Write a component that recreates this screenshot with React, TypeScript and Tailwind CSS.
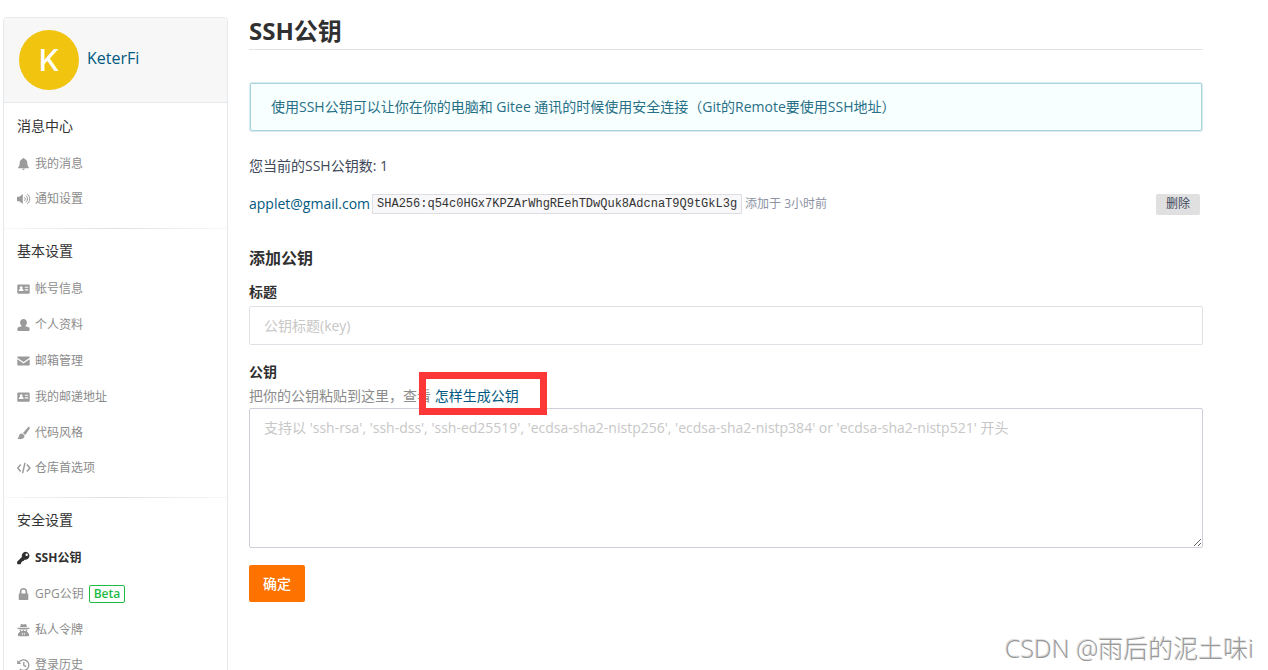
import type { ReactNode } from "react";

interface NavItem {
  label: string;
  icon: ReactNode;
  active?: boolean;
  badge?: string;
}

interface NavSection {
  title: string;
  items: NavItem[];
}

function Icon({ children }: { children: ReactNode }) {
  return (
    <svg viewBox="0.5 0 14 14" className="w-3.5 h-3.5 shrink-0" fill="currentColor" aria-hidden="true">
      {children}
    </svg>
  );
}

const bellIcon = (
  <Icon>
    <path d="M7 1c.6 0 1 .4 1 .9 1.900.5 2.800 2 2.800 3.800 0 2.400.4 3.600 1.600 4.700v.9H1.600v-.9C2.800 9.300 3.200 8.100 3.200 5.700c0-1.800.9-3.300 2.800-3.800C6 1.400 6.400 1 7 1zM5.600 11.700h2.800c-.2.800-.7 1.200-1.400 1.200s-1.200-.4-1.400-1.200z" />
  </Icon>
);

const volumeIcon = (
  <Icon>
    <path d="M.5 4.800h2.300L6.300 2v10L2.800 9.200H.5z" />
    <path
      d="M8 5.200c1.100.9 1.100 2.700 0 3.600M9.300 3.500c2.200 1.700 2.200 5.300 0 7M10.600 1.900c3.500 2.500 3.500 7.700 0 10.200"
      fill="none"
      stroke="currentColor"
      strokeWidth="1"
    />
  </Icon>
);

const cardIcon = (
  <Icon>
    <path
      fillRule="evenodd"
      d="M1.600 2.500h10.800c.4 0 .8.400.8.800v7.600c0 .4-.4.800-.8.800H1.600c-.4 0-.8-.4-.8-.8V3.300c0-.4.400-.8.800-.8zM4.700 4.300a1.400 1.400 0 0 0-.9 2.500c-1 .3-1.500 1-1.500 2.200h4.800c0-1.200-.5-1.900-1.500-2.200a1.400 1.400 0 0 0-.9-2.500zM8.300 4.700v1.100h3.400V4.700zM8.300 7.300v1.100h3.400V7.300z"
    />
  </Icon>
);

const userIcon = (
  <Icon>
    <path d="M7 1c2 0 3.400 1.400 3.400 3.400 0 1.400-.6 2.700-1.500 3.400v.5l3.300.9c.6.200.9.600.9 1.200v1.800c0 .4-.3.700-.7.700H1.600c-.4 0-.7-.3-.7-.7v-1.800c0-.6.300-1 .9-1.200l3.300-.9v-.5c-.9-.7-1.500-2-1.500-3.400C3.600 2.400 5 1 7 1z" />
  </Icon>
);

const mailIcon = (
  <Icon>
    <path d="M1.500 2.500h11c.4 0 .7.300.7.700v.6L7 8 .8 3.800v-.6c0-.4.300-.7.700-.7z" />
    <path d="M.8 5.200 7 9.400l6.200-4.200v5.600c0 .4-.3.700-.7.700h-11c-.4 0-.7-.3-.7-.7z" />
  </Icon>
);

const brushIcon = (
  <Icon>
    <path d="M12.900 1c.6.500.4 1.300 0 1.900L8.700 9 6.500 7 11.300 1.500c.4-.5 1.100-.9 1.600-.5zM5.700 7.500l2.300 2.100c.2 2.300-1.600 3.700-4.200 3.600-1.300 0-2.400-.4-3.100-1.200 1.500-.2 1.500-.9 1.700-2 .3-1.600 1.600-2.700 3.300-2.500z" />
  </Icon>
);

const codeIcon = (
  <Icon>
    <path
      d="M4.200 3.500 1.200 7l3 3.500M10.400 3.500 13.400 7l-3 3.500M8.500 1.900 6.100 12.100"
      fill="none"
      stroke="currentColor"
      strokeWidth="1.500"
    />
  </Icon>
);

const keyIcon = (
  <Icon>
    <path
      fillRule="evenodd"
      d="M9.200.8a4 4 0 1 1-1.100 7.900l-1.100 1.200H5.800v1.300H4.500v1.300c0 .4-.3.700-.7.700H1.300c-.4 0-.7-.3-.7-.7v-1.700L5.400 6A4 4 0 0 1 9.200.8zM10.200 2.500a1.200 1.200 0 1 0 0 2.500 1.200 1.200 0 0 0 0-2.500z"
    />
  </Icon>
);

const lockIcon = (
  <Icon>
    <path
      fillRule="evenodd"
      d="M7 .9c2.200 0 3.700 1.500 3.700 3.700v1.800h.3c.4 0 .8.400.8.800v5c0 .4-.4.800-.8.800H3c-.4 0-.8-.4-.8-.8v-5c0-.4.400-.8.800-.8h.3V4.600C3.300 2.400 4.800.9 7 .9zM7 2.500c-1.200 0-2 .8-2 2.100v1.800h4V4.600c0-1.300-.8-2.100-2-2.100z"
    />
  </Icon>
);

const agentIcon = (
  <Icon>
    <path d="M4.400 1.200c.9-.4 1.600.2 2.600.2s1.700-.6 2.600-.2l.9 2.900H3.500zM1 4.800h12v1.100H1z" />
    <path
      fillRule="evenodd"
      d="M3 6.600h8c0 1-.3 1.700-.8 2.200 1.500.5 2.300 1.600 2.300 3.200v.5c0 .4-.3.700-.7.700H2.200c-.4 0-.7-.3-.7-.7V12c0-1.600.8-2.700 2.300-3.200C3.300 8.300 3 7.600 3 6.600zM4.300 7.100l.4 1h1.500l.4-1zM7.400 7.100l.4 1h1.500l.4-1zM5.400 9.500l.8 3 .5-2zM8.600 9.500l-1.300 1 .5 2z"
    />
  </Icon>
);

const historyIcon = (
  <Icon>
    <path d="M.7 2v4.100h4.100z" />
    <path
      d="M2.300 4.700A5.300 5.300 0 1 1 3.400 11M7.300 3.900v3.400l2.400 1.300"
      fill="none"
      stroke="currentColor"
      strokeWidth="1.300"
    />
  </Icon>
);

const sections: NavSection[] = [
  {
    title: "消息中心",
    items: [
      { label: "我的消息", icon: bellIcon },
      { label: "通知设置", icon: volumeIcon },
    ],
  },
  {
    title: "基本设置",
    items: [
      { label: "帐号信息", icon: cardIcon },
      { label: "个人资料", icon: userIcon },
      { label: "邮箱管理", icon: mailIcon },
      { label: "我的邮递地址", icon: cardIcon },
      { label: "代码风格", icon: brushIcon },
      { label: "仓库首选项", icon: codeIcon },
    ],
  },
  {
    title: "安全设置",
    items: [
      { label: "SSH公钥", icon: keyIcon, active: true },
      { label: "GPG公钥", icon: lockIcon, badge: "Beta" },
      { label: "私人令牌", icon: agentIcon },
      { label: "登录历史", icon: historyIcon },
    ],
  },
];

function Sidebar() {
  return (
    <aside className="w-[225px] shrink-0 self-start rounded border border-[#e3e9ed] bg-white">
      <div className="flex gap-2 rounded-t border-b border-[#e3e9ed] bg-[#f7f7f7] px-[15px] py-3">
        <div className="flex w-[60px] h-[60px] items-center justify-center rounded-full bg-[#f1c40f] font-['Inter',sans-serif] text-3xl font-medium text-white">
          K
        </div>
        <a href="#profile" className="mt-4 self-start text-base leading-6 text-[#005980]">
          KeterFi
        </a>
      </div>

      <nav className="pt-px">
        {sections.map((section, index) => (
          <div key={section.title}>
            {index > 0 && <div className="h-px bg-linear-to-r from-[#f8f8f8] via-[#e0e0e0] to-[#f8f8f8]" />}
            <div className="px-[13px] pt-1 pb-3">
              <h2 className="h-[38px] text-sm leading-9 text-[#333]">{section.title}</h2>
              <ul>
                {section.items.map((item) => (
                  <li key={item.label} className="flex h-9 items-center last:h-[34px]">
                    <a
                      href="#settings"
                      className={`flex items-center gap-1 text-xs leading-3 ${
                        item.active ? "font-bold text-[#303030]" : "text-[#8c8c8c]"
                      }`}
                    >
                      <span className={item.active ? "text-[#303030]" : "text-[#9b9b9b]"}>{item.icon}</span>
                      {item.label}
                    </a>
                    {item.badge && (
                      <span className="ml-[5px] rounded-xs border border-[#21ba45] px-1 text-xs leading-4 font-semibold text-[#21ba45]">
                        {item.badge}
                      </span>
                    )}
                  </li>
                ))}
              </ul>
            </div>
          </div>
        ))}
      </nav>
    </aside>
  );
}

function KeyRow() {
  return (
    <div className="mt-4 flex h-6 items-center pr-[3px]">
      <a href="#key" className="text-sm text-[#005980]">
        applet@gmail.com
      </a>
      <code className="ml-0.5 border border-[#dddde3] bg-[#f8f8fa] px-1 font-['Liberation_Mono',monospace] text-xs leading-[18px] text-[#333]">
        SHA256:q54c0HGx7KPZArWhgREehTDwQuk8AdcnaT9Q9tGkL3g
      </code>
      <span className="ml-[3px] text-xs text-[#8c92a4]">添加于 3小时前</span>
      <button type="button" className="ml-auto h-[21px] rounded-xs bg-[#e0e0e0] px-2.5 text-xs text-[#40485b]">
        删除
      </button>
    </div>
  );
}

function KeyForm() {
  return (
    <form className="flex flex-col items-start">
      <h2 className="mt-[30px] text-base leading-6 font-semibold text-[#303030]">添加公钥</h2>

      <label htmlFor="key-title" className="mt-3 text-sm leading-5 font-bold text-[#303030]">
        标题
      </label>
      <input
        id="key-title"
        type="text"
        placeholder="公钥标题(key)"
        className="mt-1 h-[39px] w-full rounded-xs border border-[#e0e0e7] px-3.5 text-sm text-[#333] outline-none placeholder:text-[#c7c7c7]"
      />

      <label htmlFor="key-body" className="mt-[17px] text-sm leading-5 font-bold text-[#303030]">
        公钥
      </label>
      <p className="mt-1 text-sm leading-5 text-[#8c8c8c]">
        把你的公钥粘贴到这里，查看{" "}
        <span className="relative inline-block">
          <a href="#help" className="text-[#005980]">
            怎样生成公钥
          </a>
          <span className="pointer-events-none absolute -top-3.5 -right-7 -bottom-[9px] -left-4 border-[7px] border-[#fc3737]" />
        </span>
      </p>
      <textarea
        id="key-body"
        placeholder="支持以 'ssh-rsa', 'ssh-dss', 'ssh-ed25519', 'ecdsa-sha2-nistp256', 'ecdsa-sha2-nistp384' or 'ecdsa-sha2-nistp521' 开头"
        className="mt-0.5 h-[140px] w-full resize rounded-xs border border-[#cfcfda] px-3.5 py-[9px] text-sm leading-5 text-[#333] outline-none placeholder:text-[#c7c7c7]"
      />

      <button type="submit" className="mt-[17px] h-[37px] rounded-xs bg-[#fe7300] px-3.5 text-sm font-medium text-white">
        确定
      </button>
    </form>
  );
}

export default function App() {
  return (
    <div className="relative h-screen overflow-hidden bg-white font-['Open_Sans','Noto_Sans_CJK_SC',sans-serif]">
      <div className="flex gap-[21px] pt-[17px] pr-[65px] pl-[3px]">
        <Sidebar />
        <main className="min-w-0 flex-1">
          <h1 className="h-[33px] border-b border-[#e3e3e3] text-2xl leading-7 font-bold text-[#303030]">SSH公钥</h1>

          <div className="mx-px mt-[33px] rounded-xs border border-[#a9d5de] bg-[#f8ffff] px-5 py-[13px] text-sm leading-5 text-[#276f86] ring-1 ring-[#dce9ee]">
            使用SSH公钥可以让你在你的电脑和 Gitee 通讯的时候使用安全连接（Git的Remote要使用SSH地址）
          </div>

          <p className="mt-[25px] text-sm leading-5 text-[#40485b]">您当前的SSH公钥数: 1</p>

          <KeyRow />
          <KeyForm />
        </main>
      </div>

      <div className="absolute right-3.5 bottom-1.5 text-[25px] leading-8 font-light text-[#999] [text-shadow:1px_1px_0_#fff,-1px_-1px_0_#ddd]">
        CSDN @雨后的泥土味i
      </div>
    </div>
  );
}
